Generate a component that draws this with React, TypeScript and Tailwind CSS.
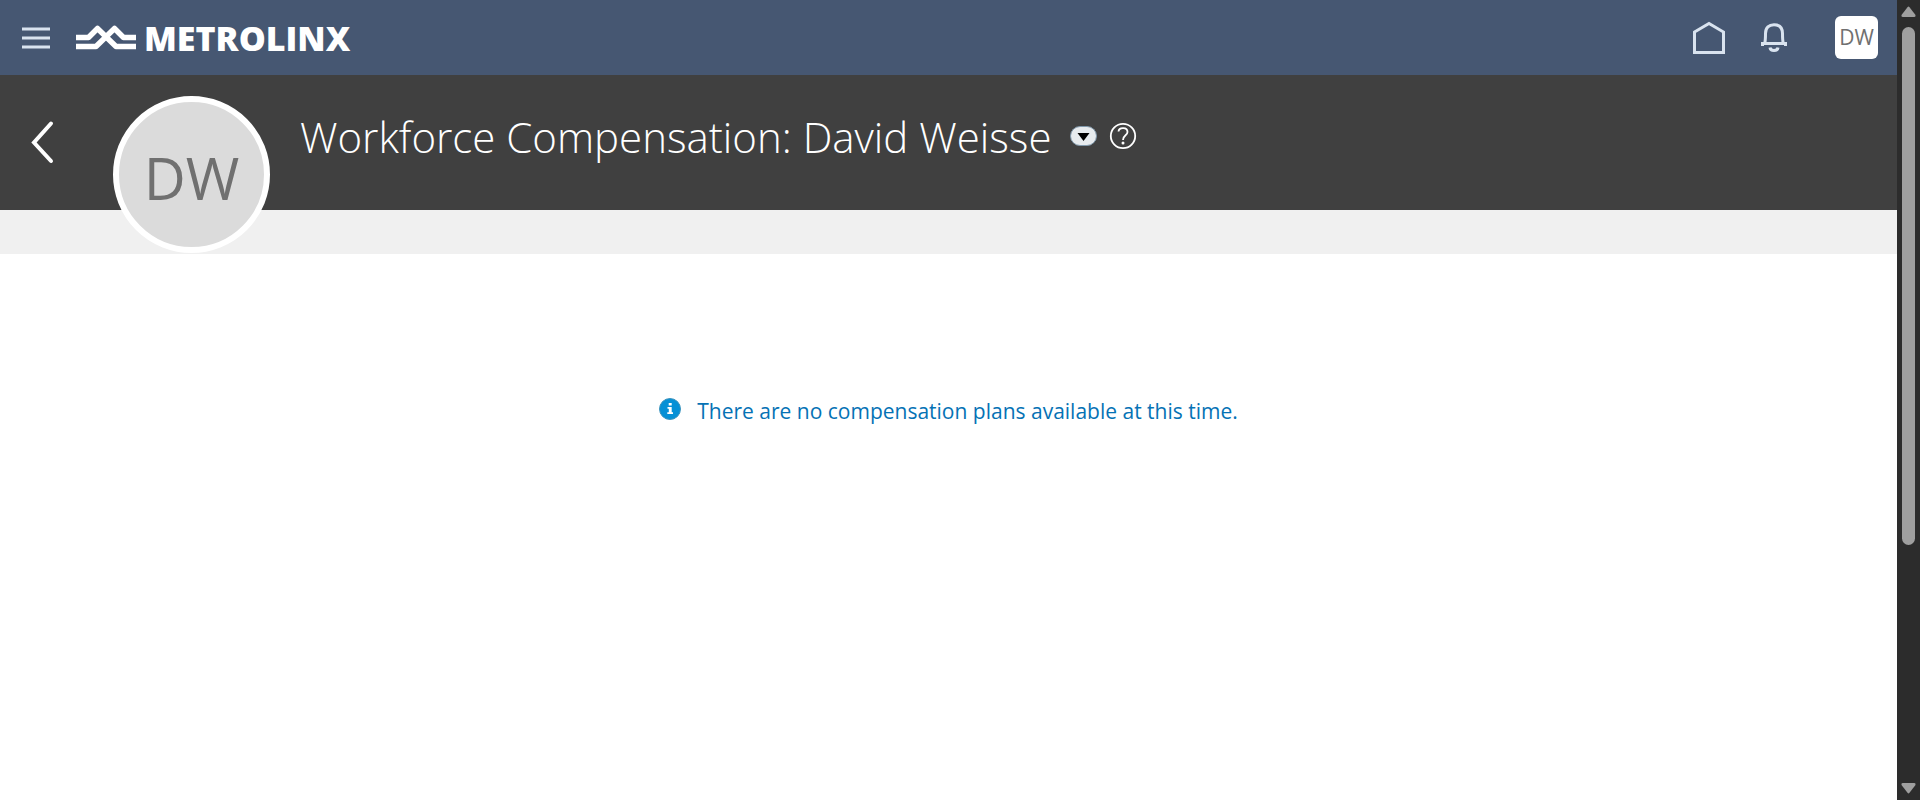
import React from "react";

function TopBar() {
  return (
    <header className="flex h-[75px] items-center bg-[#465772] pl-5 pr-[19px]">
      <button type="button" aria-label="Navigator" className="flex h-8 w-8 items-center justify-center">
        <svg width="32" height="32" viewBox="0 0 32 32" fill="#d9e3ef" aria-hidden="true">
          <path d="M2 5.5h28v3H2zM2 14.5h28v3H2zM2 23.5h28v3H2z" />
        </svg>
      </button>
      <a href="#home" aria-label="Metrolinx home" className="ml-6 flex items-center gap-2 text-white">
        <svg width="60" height="26" viewBox="0 0 60 26" fill="none" stroke="#fff" strokeWidth="5.500" strokeLinejoin="round" aria-hidden="true">
          <path d="M0 12.500H12.500L21.500 3.500L40 21.500H60" />
          <path d="M0 21.500H20L38.500 3.500L47.500 12.500H60" />
        </svg>
        <span className="font-['Open_Sans'] text-[34px] leading-[34px] font-extrabold">METROLINX</span>
      </a>
      <nav aria-label="Global" className="ml-auto flex items-center">
        <a href="#home" aria-label="Home">
          <svg width="32" height="34" viewBox="0 0 32 34" fill="none" stroke="#d9e3ef" strokeWidth="3" aria-hidden="true">
            <path d="M1.500 11L16 2.500L30.500 11V31.500H1.500z" />
          </svg>
        </a>
        <button type="button" aria-label="Notifications" className="ml-9">
          <svg width="26" height="30" viewBox="0 0 26 30" fill="none" stroke="#d9e3ef" strokeWidth="3" aria-hidden="true">
            <path d="M1.500 23V20.500H24.500V23" />
            <path d="M3.800 20C4.500 17 4.500 14 4.500 10.500C4.500 4.500 8 1.800 13 1.800S21.500 4.500 21.500 10.500C21.500 14 21.500 17 22.200 20" />
            <path d="M9 24.500C9.500 28.500 16.500 28.500 17 24.500" />
          </svg>
        </button>
        <button
          type="button"
          aria-label="Settings and actions for David Weisse"
          className="ml-12 flex h-[43px] w-[43px] items-center justify-center rounded-md bg-white font-['Open_Sans'] text-[21px] text-[#707070]"
        >
          DW
        </button>
      </nav>
    </header>
  );
}

function PageHeader() {
  return (
    <>
      <div className="flex h-[135px] items-start bg-[#404040] pl-7 pt-[21px]">
        <button type="button" aria-label="Back" className="mt-6">
          <svg width="28" height="44" viewBox="0 0 28 44" fill="none" stroke="#fff" strokeWidth="4" strokeLinecap="round" aria-hidden="true">
            <path d="M23 3.500L6 22.500L23 41" />
          </svg>
        </button>
        <div
          aria-hidden="true"
          className="z-10 ml-[57px] flex h-[157px] w-[157px] shrink-0 items-center justify-center rounded-full border-6 border-white bg-[#dbdbdb] pt-1.5 font-['Open_Sans'] text-[58px] leading-none text-[#707070]"
        >
          DW
        </div>
        <h1 className="ml-[30px] mt-2 font-['Open_Sans'] text-[42px] leading-[66px] font-light whitespace-nowrap text-white">
          Workforce Compensation: David Weisse
        </h1>
        <button type="button" aria-label="More information" className="ml-[18px] mt-[30px]">
          <svg width="27" height="20" viewBox="0 0 27 20" aria-hidden="true">
            <rect x="0.500" y="0.500" width="26" height="19" rx="9.500" fill="#e7ebee" stroke="#8098ab" />
            <path d="M7.500 7h12L13.500 15z" fill="#000" />
          </svg>
        </button>
        <button type="button" aria-label="Help" className="ml-3 mt-[26px]">
          <svg width="28" height="28" viewBox="0 0 28 28" fill="none" stroke="#fff" strokeWidth="1.800" aria-hidden="true">
            <circle cx="14" cy="14" r="12.200" />
            <path d="M9.500 9.500C10 5 18.500 5 18.500 10C18.500 13.500 14 13 14 18" />
            <circle cx="14" cy="21" r="1.500" fill="#fff" stroke="none" />
          </svg>
        </button>
      </div>
      <div className="h-11 bg-[#f0f0f0]" />
    </>
  );
}

function EmptyNotice() {
  return (
    <main className="flex items-start justify-center gap-4 pt-[142px]">
      <svg className="mt-0.5" width="22" height="22" viewBox="0 0 22 22" aria-hidden="true">
        <circle cx="11" cy="11" r="10.500" fill="#0590d6" stroke="#3d94bd" />
        <path d="M9.700 5h3v2.600h-3zM8.500 9h4.200v5.200h1.300v1.800H8.300v-1.800h1.500v-3.500H8.500z" fill="#fff" />
      </svg>
      <p className="font-['Open_Sans'] text-[21px] leading-[30px] text-[#0572b5]">
        There are no compensation plans available at this time.
      </p>
    </main>
  );
}

function ScrollRail() {
  return (
    <div aria-hidden="true" className="flex w-[23px] shrink-0 flex-col items-center bg-[#2c2c2c] py-1.5">
      <svg width="15" height="12" viewBox="0 0 15 12" fill="#9f9f9f">
        <path d="M6.500 1.200Q7.500 0 8.500 1.200L14.500 9Q15 11 13.300 11H1.700Q0 11 0.500 9z" />
      </svg>
      <div className="mt-[9px] flex w-[13px] flex-1 flex-col pb-[9px]">
        <div className="h-[69.5%] rounded-full bg-[#9f9f9f]" />
      </div>
      <svg width="15" height="12" viewBox="0 0 15 12" fill="#9f9f9f">
        <path d="M6.500 10.800Q7.500 12 8.500 10.800L14.500 3Q15 1 13.300 1H1.700Q0 1 0.500 3z" />
      </svg>
    </div>
  );
}

export default function App() {
  return (
    <div className="flex min-h-screen bg-white">
      <div className="min-w-0 flex-1">
        <TopBar />
        <PageHeader />
        <EmptyNotice />
      </div>
      <ScrollRail />
    </div>
  );
}
